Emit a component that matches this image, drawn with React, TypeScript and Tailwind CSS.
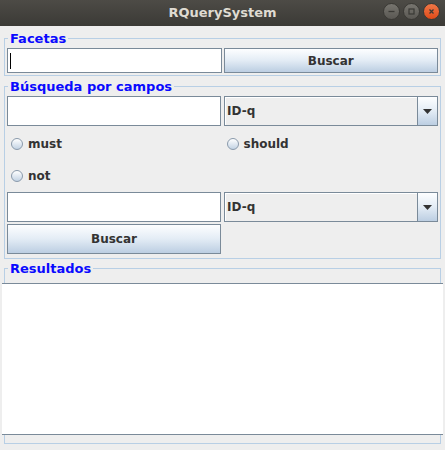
import React from "react";

const font = { fontFamily: '"DejaVu Sans", "Liberation Sans", sans-serif' };

const Legend = ({ children }: { children: React.ReactNode }) => (
  <legend className="ml-[3px] px-[2px] text-[13px] leading-[17px] font-bold text-[#0a0aff]">
    {children}
  </legend>
);

const TextField = ({ caret = false }: { caret?: boolean }) => (
  <div className="h-full border border-[#7a8a99] bg-white flex items-center pl-[2px]">
    {caret && <div className="w-px h-[16px] bg-black" />}
  </div>
);

const Button = ({ label }: { label: string }) => (
  <div className="h-full border border-[#7a8a99] bg-gradient-to-b from-[#fdfeff] via-[#e3ecf5] to-[#bccee2] flex items-center justify-center text-[12px] font-bold text-[#333333]">
    {label}
  </div>
);

const Combo = () => (
  <div className="h-full border border-[#7a8a99] bg-[#eeeeee] flex">
    <div className="flex-1 flex items-center pl-[2px] text-[12px] font-bold text-[#333333] border-r border-[#7a8a99] shadow-[inset_1px_1px_0_#ffffff]">
      ID-q
    </div>
    <div className="w-[19px] bg-gradient-to-b from-[#fdfeff] via-[#e3ecf5] to-[#bccee2] flex items-center justify-center">
      <svg width="9" height="5" viewBox="0 0 9 5">
        <path d="M0 0 H9 L4.5 5 Z" fill="#333333" />
      </svg>
    </div>
  </div>
);

const Radio = ({ label }: { label: string }) => (
  <div className="flex items-center pl-[4px] gap-[5px] text-[12px] font-bold text-[#333333]">
    <div className="w-[12px] h-[12px] rounded-full border border-[#8a9aab] bg-gradient-to-b from-[#ffffff] to-[#c3d3e4]" />
    {label}
  </div>
);

const WinButton = ({ kind }: { kind: "min" | "max" | "close" }) => (
  <div
    className={
      kind === "close"
        ? "w-[17px] h-[17px] rounded-full bg-gradient-to-b from-[#f07746] to-[#df4a16] border border-[#3a3935] flex items-center justify-center"
        : "w-[17px] h-[17px] rounded-full bg-gradient-to-b from-[#77756f] to-[#5a5853] border border-[#3a3935] flex items-center justify-center"
    }
  >
    <svg width="9" height="9" viewBox="0 0 9 9">
      {kind === "min" && <path d="M1.5 4.5 H7.5" stroke="#3a3935" strokeWidth="1.3" />}
      {kind === "max" && <rect x="2" y="2" width="5" height="5" fill="none" stroke="#3a3935" strokeWidth="1.2" />}
      {kind === "close" && <path d="M2.5 2.5 L6.5 6.5 M6.5 2.5 L2.5 6.5" stroke="#3a3935" strokeWidth="1.3" />}
    </svg>
  </div>
);

export default function App() {
  return (
    <div className="w-[445px] h-[450px] bg-[#eeeeee] flex flex-col overflow-hidden" style={font}>
      {/* title bar */}
      <div className="h-[26px] shrink-0 bg-gradient-to-b from-[#4d4b46] to-[#3b3a36] flex items-center relative">
        <div className="flex-1 text-center text-[13px] font-bold text-[#dfdbd2] -mt-[1px]">RQuerySystem</div>
        <div className="absolute right-[5px] top-[3px] flex gap-[3px]">
          <WinButton kind="min" />
          <WinButton kind="max" />
          <WinButton kind="close" />
        </div>
      </div>

      {/* Facetas */}
      <fieldset className="mx-[4px] mt-[4px] border border-[#b8cfe5]">
        <Legend>Facetas</Legend>
        <div className="px-[2px] pt-px pb-[2px] grid grid-cols-2 gap-[2px]">
          <div className="h-[25px]">
            <TextField caret />
          </div>
          <div className="h-[25px]">
            <Button label="Buscar" />
          </div>
        </div>
      </fieldset>

      {/* Búsqueda por campos */}
      <fieldset className="mx-[4px] mt-[2px] border border-[#b8cfe5]">
        <Legend>Búsqueda por campos</Legend>
        <div className="px-[2px] pt-px pb-[4px] flex flex-col">
          <div className="grid grid-cols-2 gap-[3px] h-[30px]">
            <TextField />
            <Combo />
          </div>
          <div className="mt-[2px] grid grid-cols-2 grid-rows-2 h-[64px]">
            <Radio label="must" />
            <Radio label="should" />
            <Radio label="not" />
          </div>
          <div className="grid grid-cols-2 gap-[3px] h-[30px]">
            <TextField />
            <Combo />
          </div>
          <div className="mt-[2px] grid grid-cols-2 gap-[3px] h-[30px]">
            <Button label="Buscar" />
          </div>
        </div>
      </fieldset>

      {/* Resultados */}
      <fieldset className="mx-[4px] mt-px border border-[#b8cfe5]">
        <Legend>Resultados</Legend>
        <div className="mt-[6px] mb-[8px] -mx-[3px] h-[152px] bg-white border-y border-[#7a8a99]" />
      </fieldset>
    </div>
  );
}
